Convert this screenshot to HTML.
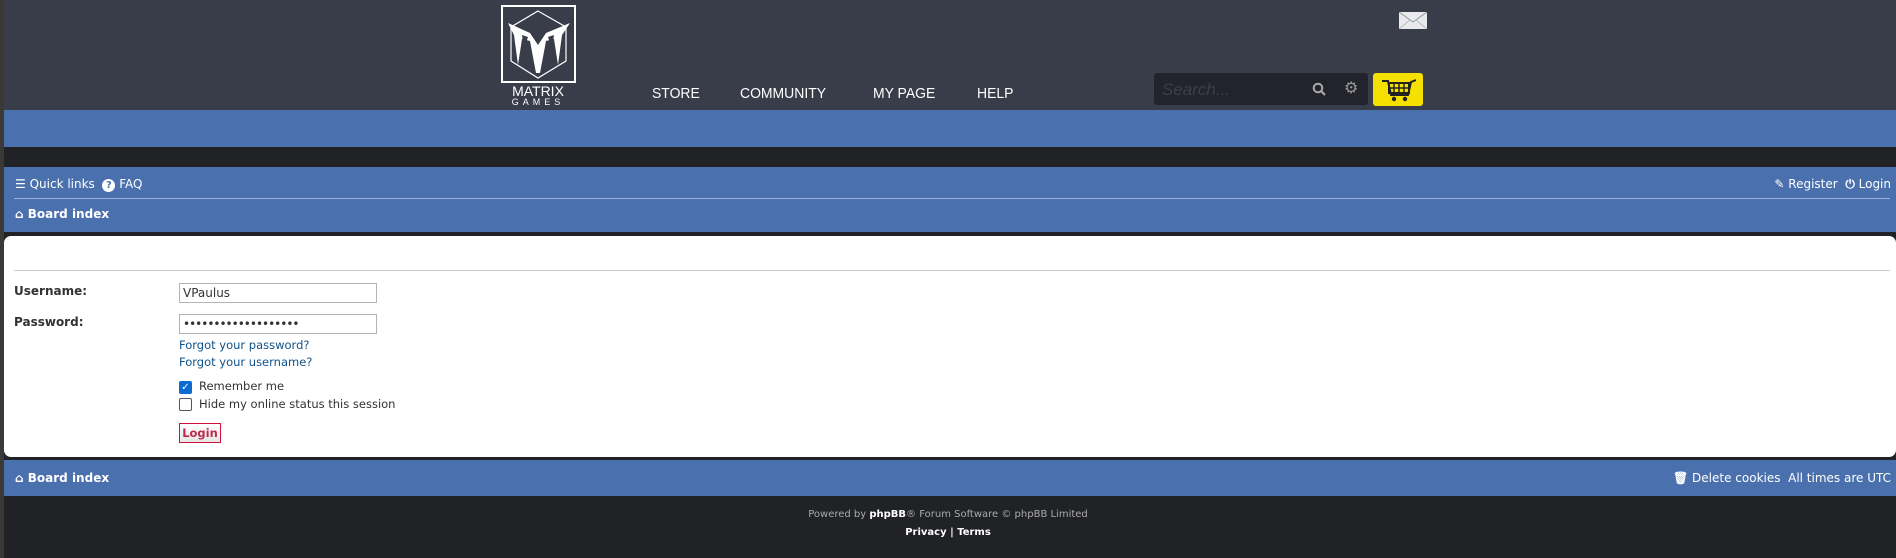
<!DOCTYPE html>
<html><head><meta charset="utf-8"><style>
*{margin:0;padding:0;box-sizing:border-box}
body{width:1896px;height:558px;background:#202226;position:relative;overflow:hidden;font-family:"DejaVu Sans","Liberation Sans",sans-serif}
.a{position:absolute}
.hdr{left:0;top:0;width:1896px;height:110px;background:#393c49}
.band{left:4px;top:110px;width:1892px;height:37px;background:#4a70ae}
.strip{left:0;top:0;width:4px;height:558px;background:#3b3936}
.nav{left:4px;top:167px;width:1892px;height:65px;background:#4a70ae}
.panel{left:4px;top:236px;width:1892px;height:221px;background:#fff;border-radius:7px}
.foot{left:4px;top:460px;width:1892px;height:36px;background:#4a70ae}
.w{color:#fff;font-size:12px;white-space:nowrap}
.nv{color:#fff;font-family:"Liberation Sans",sans-serif;font-size:15px;top:85px;transform:scaleX(0.93);transform-origin:left}
.lbl{font-size:12px;font-weight:bold;color:#333;left:14px}
.inp{left:179px;width:198px;height:20px;border:1px solid #b4b4b4;background:#fff;font-size:12px;padding:2px 3px;color:#333}
.lnk{left:179px;font-size:11.5px;color:#105289}
.cb{left:179px;width:13px;height:13px;border:1px solid #555;border-radius:2px;background:#fff}
.ct{left:199px;font-size:11.5px;color:#333}
</style></head><body>
<div class="a hdr"></div>
<div class="a band"></div>
<div class="a nav"></div>
<div class="a panel"></div>
<div class="a foot"></div>
<div class="a strip"></div>

<svg class="a" style="left:500px;top:5px" width="78" height="100" viewBox="0 0 78 100">
<rect x="2" y="1" width="73" height="76" fill="none" stroke="#fff" stroke-width="2"/>
<polygon points="38,6 66,22 66,56 38,73 11,56 11,22" fill="none" stroke="#fff" stroke-width="1.2"/>
<path d="M8,18 L30,28 L38,40 L46,28 L70,18 L62,30 L58,60 L54,34 L46,36 L40,68 L36,68 L30,36 L22,34 L18,60 L14,30 Z" fill="#fff"/>
<path d="M22,30 L28,32 L24,44 Z M54,30 L48,32 L52,44 Z" fill="#393c49"/>
<text x="38" y="91" fill="#fff" font-family="Liberation Sans" font-size="14" text-anchor="middle">MATRIX</text>
<text x="38" y="100" fill="#fff" font-family="Liberation Sans" font-size="9" letter-spacing="4" text-anchor="middle">GAMES</text>
</svg>

<div class="a nv" style="left:652px">STORE</div>
<div class="a nv" style="left:740px">COMMUNITY</div>
<div class="a nv" style="left:873px">MY PAGE</div>
<div class="a nv" style="left:977px">HELP</div>

<svg class="a" style="left:1399px;top:12px" width="28" height="17"><rect width="28" height="17" fill="#e8eaee"/><path d="M0,0 L14,10 L28,0" fill="none" stroke="#999" stroke-width="1"/><path d="M0,17 L11,8 M28,17 L17,8" stroke="#bbb"/></svg>

<div class="a" style="left:1154px;top:73px;width:214px;height:32px;background:#22232d;border-radius:3px"></div>
<div class="a" style="left:1162px;top:80px;font-size:17px;font-style:italic;color:#3c3e4a;font-family:'Liberation Sans',sans-serif">Search...</div>
<svg class="a" style="left:1312px;top:82px" width="14" height="14"><circle cx="6" cy="6" r="4.3" fill="none" stroke="#aaa" stroke-width="2"/><path d="M9,9 L13,13" stroke="#aaa" stroke-width="2.2"/></svg>
<div class="a" style="left:1344px;top:78px;color:#999;font-size:16px;font-weight:bold">⚙</div>
<div class="a" style="left:1373px;top:73px;width:50px;height:33px;background:#f6e000;border-radius:3px"></div>
<svg class="a" style="left:1380px;top:77px" width="36" height="26" viewBox="0 0 36 26"><path d="M2,4 L8,4 L11,18 L28,18 L31,5 L36,3" fill="none" stroke="#222" stroke-width="2"/><rect x="9" y="6" width="20" height="10" fill="none" stroke="#222" stroke-width="2"/><path d="M14,6V16M19,6V16M24,6V16M9,11H29" stroke="#222" stroke-width="1.5"/><circle cx="14" cy="22" r="2.2" fill="#222"/><circle cx="25" cy="22" r="2.2" fill="#222"/></svg>

<div class="a w" style="left:15px;top:177px"><b>☰</b> Quick links &nbsp;<b style="display:inline-block;width:13px;height:13px;border-radius:7px;background:#fff;color:#4a70ae;font-size:10px;text-align:center;line-height:13px">?</b> FAQ</div>
<div class="a w" style="right:5px;top:177px"><b>✎</b> Register &nbsp;<b>⏻</b> Login</div>
<div class="a" style="left:14px;top:198px;width:1876px;height:1px;background:#9db2d6"></div>
<div class="a w" style="left:15px;top:207px;font-weight:bold">⌂ Board index</div>

<div class="a" style="left:14px;top:270px;width:1876px;height:1px;background:#ccc"></div>
<div class="a lbl" style="top:284px">Username:</div>
<div class="a lbl" style="top:315px">Password:</div>
<div class="a inp" style="top:283px">VPaulus</div>
<div class="a inp" style="top:314px;letter-spacing:-1px">•••••••••••••••••••</div>
<div class="a lnk" style="top:338px">Forgot your password?</div>
<div class="a lnk" style="top:355px">Forgot your username?</div>
<div class="a cb" style="top:381px;background:#0b6bd3;border-color:#0b6bd3;color:#fff;font-size:10px;line-height:11px;text-align:center">✓</div>
<div class="a ct" style="top:379px">Remember me</div>
<div class="a cb" style="top:398px"></div>
<div class="a ct" style="top:397px">Hide my online status this session</div>
<div class="a" style="left:179px;top:423px;width:42px;height:20px;border:1px solid #d31141;background:linear-gradient(#fff,#e6e6e6);color:#bc2a4d;font-size:11.5px;font-weight:bold;text-align:center;line-height:18px">Login</div>

<div class="a w" style="left:15px;top:471px;font-weight:bold">⌂ Board index</div>
<div class="a w" style="right:5px;top:471px"><b>🗑</b> Delete cookies &nbsp;All times are UTC</div>
<div class="a" style="left:0;width:1896px;text-align:center;top:509px;font-size:10px;color:#aaa">Powered by <b style="color:#fff">phpBB</b>® Forum Software © phpBB Limited</div>
<div class="a" style="left:0;width:1896px;text-align:center;top:527px;font-size:10px;color:#fff;font-weight:bold">Privacy | Terms</div>
</body></html>
